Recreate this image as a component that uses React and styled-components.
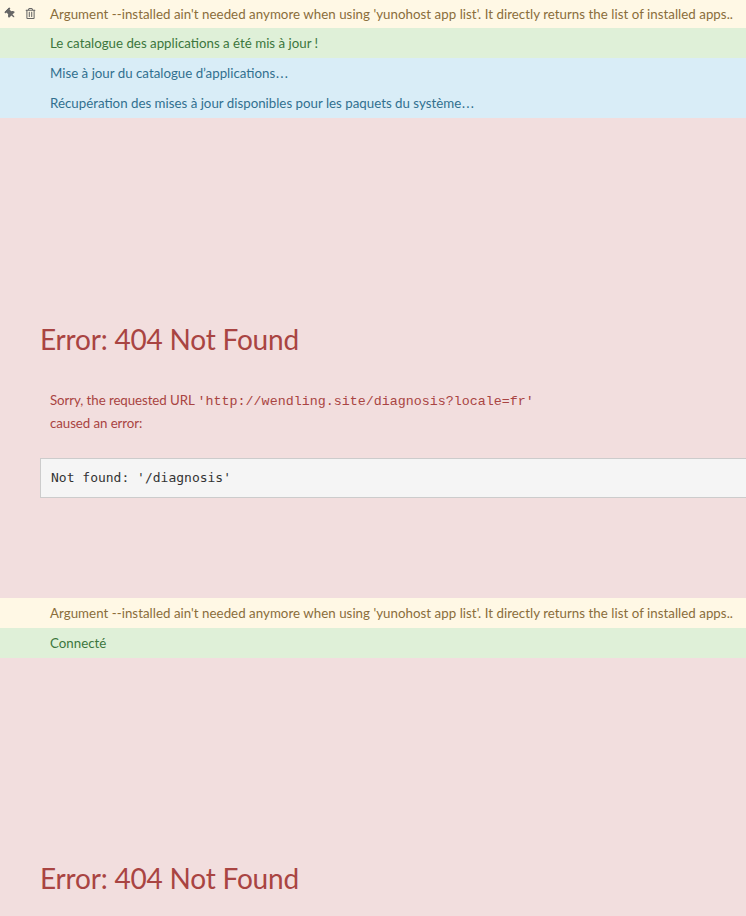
import React from 'react';
import styled, { createGlobalStyle } from 'styled-components';
import { FaThumbtack, FaRegTrashAlt } from 'react-icons/fa';

const Global = createGlobalStyle`
  html, body { margin: 0; padding: 0; background: #f2dede; }
  body { font-family: "Lato", "Noto Sans", sans-serif; font-size: 13.3px; line-height: 20px; overflow: hidden; height: 916px; }
`;

const Page = styled.div`
  width: 746px;
  height: 916px;
  overflow: hidden;
  background: #f2dede;
  color: #a94442;
`;

const tones = {
  warning: ['#fff8e5', '#8a6d3b'],
  success: ['#dff0d8', '#3c763d'],
  info: ['#d9edf7', '#31708f'],
};

const Alert = styled.div`
  display: block;
  height: ${p => p.$h || 30}px;
  line-height: ${p => p.$h || 30}px;
  background: ${p => tones[p.$tone][0]};
  color: ${p => tones[p.$tone][1]};
  padding-left: 50px;
  white-space: nowrap;
  position: relative;
  letter-spacing: ${p => (p.$tone === 'warning' ? '0.033px' : '0')};
`;

const Dots = styled.span`
  font-family: "DejaVu Sans", sans-serif;
`;

const Tools = styled.div`
  position: absolute;
  left: 5px;
  top: 8px;
  display: flex;
  gap: 9px;
  align-items: center;
  color: #666;
`;

const Section = styled.section`
  padding: ${p => p.$top}px 0 0 40px;
  height: ${p => p.$height}px;
  box-sizing: border-box;
`;

const Heading = styled.h1`
  margin: 0;
  font-size: 28px;
  letter-spacing: -0.2px;
  font-weight: 400;
  line-height: 36px;
`;

const Message = styled.p`
  margin: 32px 0 0 10px;
  line-height: 23px;
  letter-spacing: -0.08px;
`;

const Code = styled.code`
  font-family: "Liberation Mono", monospace;
  font-size: 13.35px;
  letter-spacing: 0;
  line-height: 1;
`;

const Pre = styled.pre`
  margin: 23px 0 0;
  width: 760px;
  height: 40px;
  box-sizing: border-box;
  padding: 9px 10px;
  background: #f5f5f5;
  border: 1px solid #ccc;
  color: #333;
  font-family: "DejaVu Sans Mono", monospace;
  font-size: 13px;
  line-height: 19px;
`;

const warningText = "Argument --installed ain't needed anymore when using 'yunohost app list'. It directly returns the list of installed apps..";

export default function App() {
  return (
    <Page>
      <Global />
      <Alert $tone="warning" $h={28}>
        <Tools>
          <FaThumbtack size={11} style={{ transform: 'rotate(-45deg)' }} />
          <FaRegTrashAlt size={11} />
        </Tools>
        {warningText}
      </Alert>
      <Alert $tone="success">Le catalogue des applications a été mis à jour !</Alert>
      <Alert $tone="info">Mise à jour du catalogue d’applications<Dots>…</Dots></Alert>
      <Alert $tone="info">Récupération des mises à jour disponibles pour les paquets du système<Dots>…</Dots></Alert>
      <Section $top={203} $height={480}>
        <Heading>Error: 404 Not Found</Heading>
        <Message>
          Sorry, the requested URL <Code>'http://wendling.site/diagnosis?locale=fr'</Code>
          <br />
          caused an error:
        </Message>
        <Pre>Not found: '/diagnosis'</Pre>
      </Section>
      <Alert $tone="warning">{warningText}</Alert>
      <Alert $tone="success">Connecté</Alert>
      <Section $top={202} $height={258}>
        <Heading>Error: 404 Not Found</Heading>
      </Section>
    </Page>
  );
}
